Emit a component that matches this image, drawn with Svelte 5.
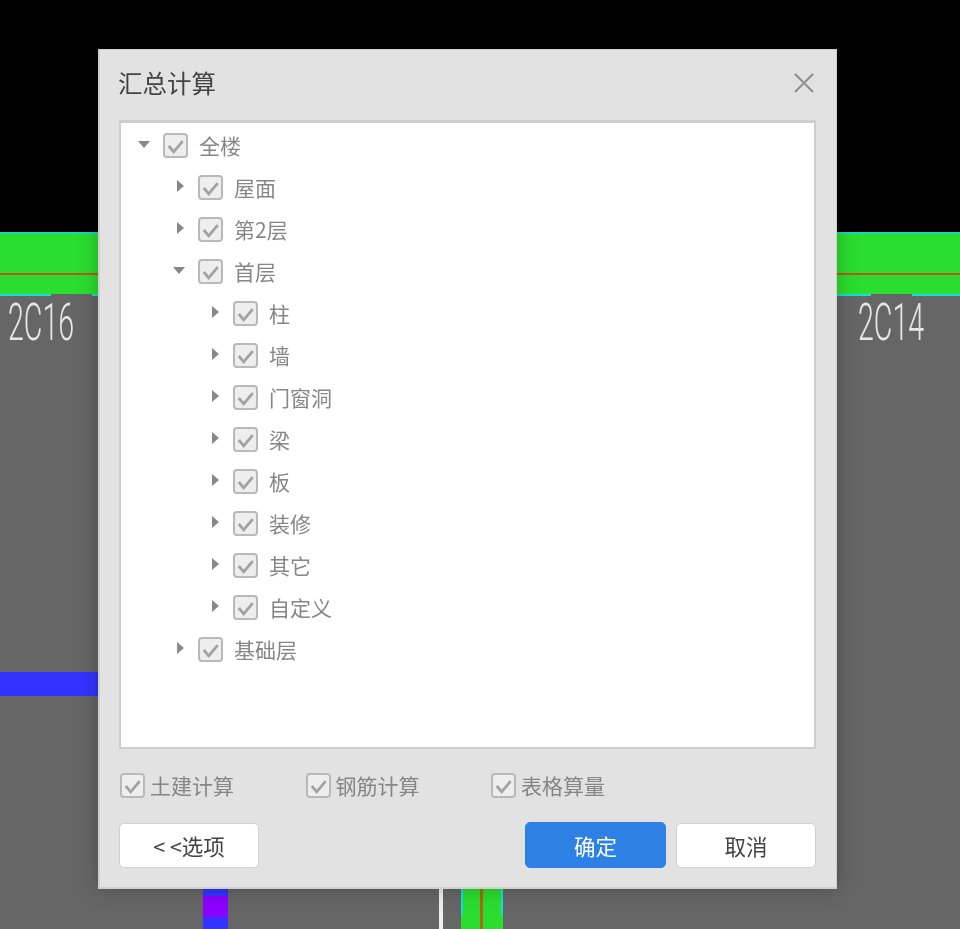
<script lang="ts">
  type Row = { label: string; level: number; open?: boolean };

  const rows: Row[] = [
    { label: '全楼', level: 0, open: true },
    { label: '屋面', level: 1 },
    { label: '第2层', level: 1 },
    { label: '首层', level: 1, open: true },
    { label: '柱', level: 2 },
    { label: '墙', level: 2 },
    { label: '门窗洞', level: 2 },
    { label: '梁', level: 2 },
    { label: '板', level: 2 },
    { label: '装修', level: 2 },
    { label: '其它', level: 2 },
    { label: '自定义', level: 2 },
    { label: '基础层', level: 1 },
  ];

  const calcOptions = ['土建计算', '钢筋计算', '表格算量'];
</script>

{#snippet checkbox()}
  <svg class="check" width="25" height="25" viewBox="0 0 25 25" aria-hidden="true">
    <rect x="1" y="1" width="23" height="23" rx="3" fill="#eee" stroke="#b9b9b9" stroke-width="2" />
    <path d="M5.8 13l4.9 5.8 9-10.7" fill="none" stroke="#a2a2a2" stroke-width="2.8" />
  </svg>
{/snippet}

<div class="canvas">
  <!-- drawing behind the dialog -->
  <div class="black"></div>
  <div class="beam"></div>
  <div class="beam-line"></div>
  <div class="edge edge-a"></div>
  <div class="edge edge-b"></div>
  <div class="edge edge-c"></div>
  <div class="edge edge-d"></div>
  <span class="cad cad-left">2C16</span>
  <span class="cad cad-right">2C14</span>
  <div class="blue-bar"></div>
  <div class="post"></div>
  <div class="post-mid"></div>
  <div class="white-line"></div>
  <div class="column"></div>
  <div class="column-line"></div>

  <div class="dialog" role="dialog" aria-label="汇总计算">
    <header class="head">
      <h1>汇总计算</h1>
      <svg class="close" width="20" height="20" viewBox="0 0 20 20" aria-label="关闭">
        <path d="M1 1l18 18M19 1L1 19" stroke="#8f8f8f" stroke-width="2" fill="none" />
      </svg>
    </header>

    <div class="tree">
      {#each rows as row}
        <div class="row" class:l1={row.level === 1} class:l2={row.level === 2}>
          <span class="toggle">
            {#if row.open}
              <svg class="down" width="12" height="7" viewBox="0 0 12 7"><path d="M0 0h12L6 7z" fill="#888" /></svg>
            {:else}
              <svg width="7" height="12" viewBox="0 0 7 12"><path d="M0 0v12L7 6z" fill="#888" /></svg>
            {/if}
          </span>
          {@render checkbox()}
          <span class="label">{row.label}</span>
        </div>
      {/each}
    </div>

    <div class="options">
      {#each calcOptions as opt}
        <div class="option">
          {@render checkbox()}
          <span>{opt}</span>
        </div>
      {/each}
    </div>

    <div class="actions">
      <button type="button" class="btn">&lt; &lt;选项</button>
      <div class="right">
        <button type="button" class="btn primary">确定</button>
        <button type="button" class="btn">取消</button>
      </div>
    </div>
  </div>
</div>

<style>
  :global(body) {
    margin: 0;
    background: #666;
  }

  .canvas {
    position: relative;
    width: 960px;
    height: 929px;
    overflow: hidden;
    background: #666;
    font-family: "Noto Sans CJK SC", "Liberation Sans", sans-serif;
    filter: blur(0.4px);
  }

  .black {
    position: absolute;
    left: 0;
    top: 0;
    width: 960px;
    height: 233px;
    background: #000;
  }

  .beam {
    position: absolute;
    left: 0;
    top: 232px;
    width: 960px;
    height: 62px;
    background: #2bdd2f;
    border-top: 2px solid #16d9c4;
    box-sizing: border-box;
  }

  .beam-line {
    position: absolute;
    left: 0;
    top: 273px;
    width: 960px;
    height: 2px;
    background: #b9571a;
  }

  .edge {
    position: absolute;
    top: 294px;
    height: 2px;
    background: #10e0e0;
  }

  .edge-a { left: 0; width: 51px; }
  .edge-b { left: 92px; width: 6px; }
  .edge-c { left: 837px; width: 34px; }
  .edge-d { left: 912px; width: 48px; }

  .cad {
    position: absolute;
    top: 293px;
    font-family: Roboto, "Liberation Sans", sans-serif;
    font-weight: 300;
    font-size: 52px;
    line-height: 60px;
    color: #e6e6e6;
    transform: scaleX(0.55);
    transform-origin: left top;
    white-space: nowrap;
  }

  .cad-left { left: 8px; }
  .cad-right { left: 858px; }

  .blue-bar {
    position: absolute;
    left: 0;
    top: 672px;
    width: 100px;
    height: 24px;
    background: #3333ff;
  }

  .post {
    position: absolute;
    left: 203px;
    top: 880px;
    width: 25px;
    height: 49px;
    background: #3333ff;
  }

  .post-mid {
    position: absolute;
    left: 203px;
    top: 896px;
    width: 25px;
    height: 21px;
    background: #8c00ff;
  }

  .white-line {
    position: absolute;
    left: 439px;
    top: 880px;
    width: 4px;
    height: 49px;
    background: #eee;
  }

  .column {
    position: absolute;
    left: 461px;
    top: 880px;
    width: 42px;
    height: 49px;
    box-sizing: border-box;
    background: #2bdd2f;
  }

  .column::before,
  .column::after {
    content: '';
    position: absolute;
    top: 0;
    width: 2px;
    height: 35px;
    background: #10e0e0;
  }

  .column::before { left: 0; }
  .column::after { right: 0; }

  .column-line {
    position: absolute;
    left: 480px;
    top: 880px;
    width: 3px;
    height: 49px;
    background: #a86a14;
  }

  .dialog {
    position: absolute;
    left: 98px;
    top: 49px;
    width: 739px;
    height: 840px;
    box-sizing: border-box;
    padding: 0 20px 0 21px;
    display: flex;
    flex-direction: column;
    background: #e2e2e2;
    border: 1px solid #cfcfcf;
    border-left-width: 2px;
    border-bottom-width: 2px;
    box-shadow: 0 0 20px rgba(0, 0, 0, 0.25);
  }

  .head {
    display: flex;
    align-items: center;
    justify-content: space-between;
    box-sizing: border-box;
    height: 70px;
    padding-bottom: 4px;
    flex: none;
  }

  .head h1 {
    margin: 0 0 0 -3px;
    font-size: 24.5px;
    font-weight: 400;
    color: #444;
    line-height: 1.4;
  }

  .close {
    margin-right: 2.5px;
  }

  .tree {
    box-sizing: border-box;
    height: 629px;
    flex: none;
    margin-left: -2px;
    padding-top: 1px;
    background: #fff;
    border: 2px solid #cdcdcd;
    border-top-width: 3px;
  }

  .row {
    display: flex;
    align-items: center;
    height: 42px;
    padding-left: 15px;
  }

  .row.l1 { padding-left: 50px; }
  .row.l2 { padding-left: 85px; }

  .toggle {
    box-sizing: border-box;
    width: 27px;
    padding-right: 8px;
    display: flex;
    justify-content: center;
    flex: none;
    margin-top: -2px;
  }

  .toggle .down {
    margin-right: 3px;
  }

  .check {
    flex: none;
    display: block;
  }

  .label {
    margin-left: 11px;
    font-size: 21px;
    line-height: 30px;
    margin-top: -1px;
    color: #868686;
    white-space: nowrap;
  }

  .options {
    display: grid;
    grid-template-columns: repeat(3, 185.5px);
    height: 72px;
    align-items: center;
    flex: none;
    margin-left: -1px;
  }

  .option {
    display: flex;
    align-items: center;
    gap: 5px;
    font-size: 21px;
    color: #868686;
  }

  .actions {
    display: flex;
    justify-content: space-between;
    align-items: center;
    margin-top: 1px;
    margin-left: -2px;
  }

  .right {
    display: flex;
    align-items: center;
    gap: 10px;
  }

  .btn {
    width: 140px;
    height: 45px;
    padding: 0;
    box-sizing: border-box;
    font-family: inherit;
    font-size: 21.5px;
    color: #444;
    background: #fff;
    border: 1px solid #d0d0d0;
    border-radius: 5px;
  }

  .btn.primary {
    width: 141px;
    height: 46px;
    color: #fff;
    background: #2e81e4;
    border-color: #2e81e4;
  }
</style>
